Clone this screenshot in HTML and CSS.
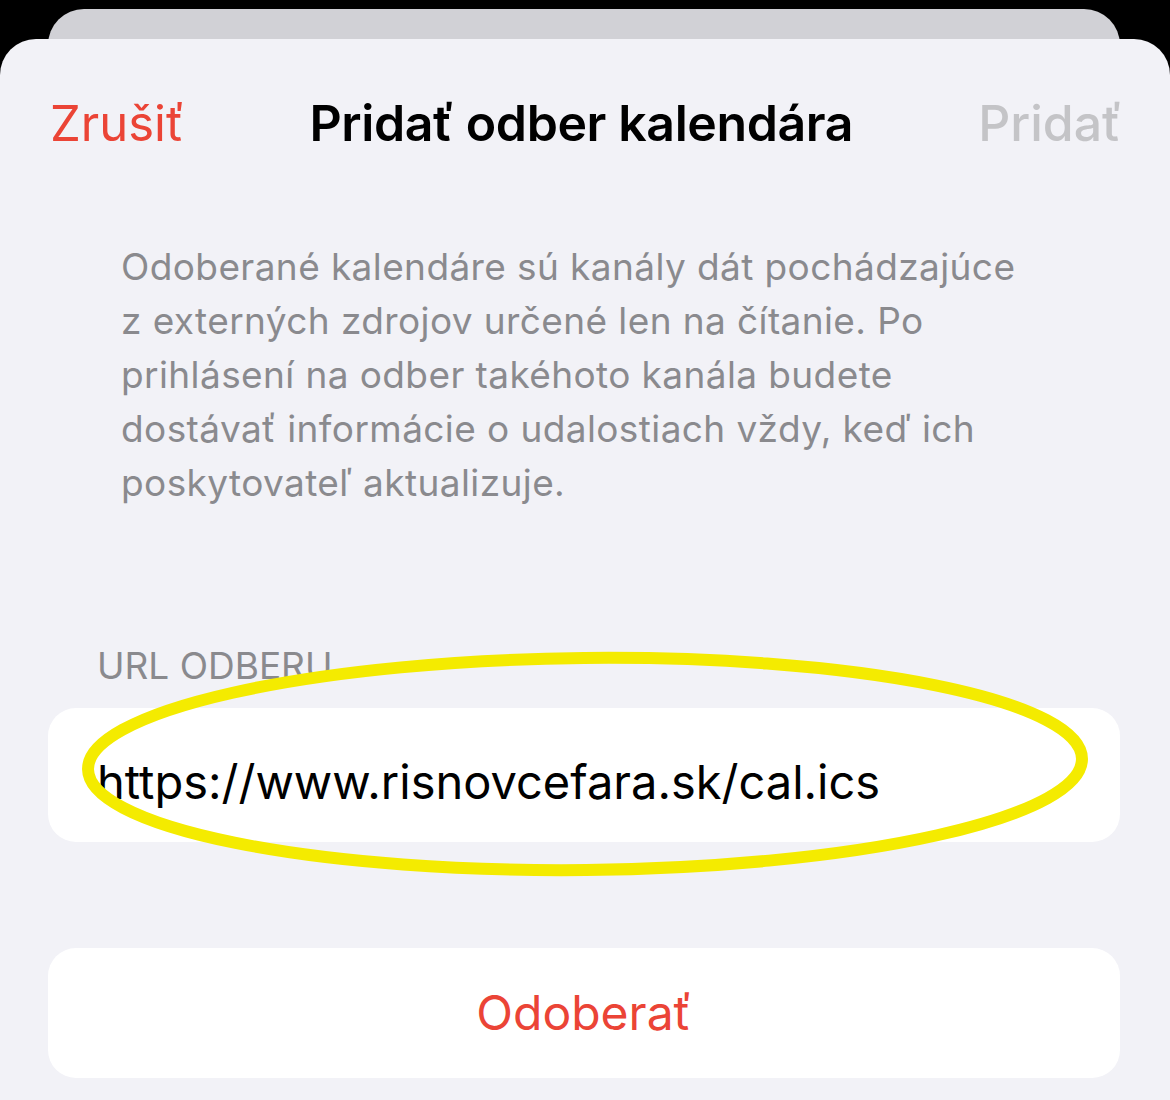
FILE: index.html
```html
<!DOCTYPE html>
<html lang="sk">
<head>
  <meta charset="UTF-8">
  <title>Pridať odber kalendára</title>
  <link rel="stylesheet" href="styles.css">
</head>
<body>
  <!-- sheet behind -->
  <div class="back-sheet"></div>

  <!-- main sheet -->
  <div class="sheet">
    <div class="navbar">
      <span class="nav-cancel">Zrušiť</span>
      <h1>Pridať odber kalendára</h1>
      <span class="nav-add">Pridať</span>
    </div>

    <p class="info">
      Odoberané kalendáre sú kanály dát pochádzajúce<br>
      z externých zdrojov určené len na čítanie. Po<br>
      prihlásení na odber takéhoto kanála budete<br>
      dostávať informácie o udalostiach vždy, keď ich<br>
      poskytovateľ aktualizuje.
    </p>

    <div class="field-section">
      <div class="section-label">URL odberu</div>
      <div class="card url-card">https://www.risnovcefara.sk/cal.ics</div>

      <!-- highlight drawn over the screenshot -->
      <svg class="highlight" width="1020" height="240" viewBox="0 0 1020 240">
        <ellipse cx="508" cy="118" rx="497" ry="106" fill="none" stroke="#f4eb00" stroke-width="12" transform="rotate(-0.6 508 118)"/>
      </svg>
    </div>

    <div class="card button-card">Odoberať</div>
  </div>
</body>
</html>
```

FILE: styles.css
```css
/* styles.css */

:root {
  --sheet-bg: #f2f2f7;
  --back-bg: #d1d1d6;
  --red: #eb4436;
  --gray-text: #8a8a8e;
  --disabled: #c4c4c7;
}

html, body {
  margin: 0;
  height: 100%;
}

body {
  background: #000;
  font-family: Inter, "Liberation Sans", sans-serif;
  overflow: hidden;
}

.back-sheet {
  height: 60px;
  margin: 9px 50px 0 48px;
  background: var(--back-bg);
  border-radius: 36px 36px 0 0;
}

.sheet {
  margin-top: -30px;
  height: 1100px;
  background: var(--sheet-bg);
  border-radius: 36px 36px 0 0;
  position: relative;
}

.navbar {
  display: flex;
  justify-content: space-between;
  align-items: center;
  padding: 56px 48px 0 50px;
  height: 56px;
}

.navbar h1 {
  margin: 0;
  font-size: 50px;
  font-weight: 600;
  color: #000;
  letter-spacing: -0.4px;
}

.nav-cancel {
  font-size: 49px;
  color: var(--red);
}

.nav-add {
  font-size: 50px;
  font-weight: 500;
  color: var(--disabled);
}

.info {
  margin: 89px 0 0 121px;
  font-size: 37px;
  line-height: 54px;
  color: var(--gray-text);
  letter-spacing: 0.4px;
}

.field-section {
  position: relative;
  margin-top: 133px;
}

.section-label {
  margin-left: 97px;
  font-size: 37px;
  text-transform: uppercase;
  color: var(--gray-text);
  height: 50px;
}

.card {
  background: #fff;
  border-radius: 28px;
  margin: 0 50px 0 48px;
}

.url-card {
  margin-top: 15px;
  height: 134px;
  line-height: 148px;
  padding-left: 49px;
  font-size: 47px;
  color: #000;
}

.highlight {
  position: absolute;
  left: 77px;
  top: 3px;
}

.button-card {
  margin-top: 106px;
  height: 130px;
  line-height: 130px;
  text-align: center;
  font-size: 48px;
  color: var(--red);
}
```
